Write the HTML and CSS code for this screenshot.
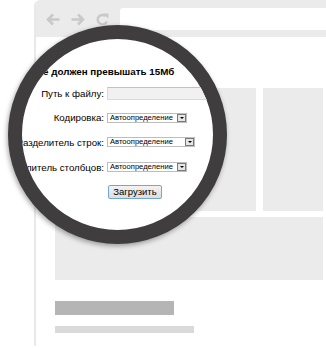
FILE: index.html
```html
<!DOCTYPE html>
<html>
<head>
	<meta charset="UTF-8">
	<title>Загрузка файла</title>
	<link rel="stylesheet" href="styles.css">
</head>
<body>
<div class="CLS_Browser">
	<div class="CLS_Toolbar">
		<div class="CLS_Nav">
			<svg width="14" height="13" viewBox="0 0 14 13"><path d="M13.5 6.5H2M7 1.5L2 6.5l5 5" fill="none" stroke="#c9c9c9" stroke-width="2.6"/></svg>
			<svg width="14" height="13" viewBox="0 0 14 13"><path d="M0.5 6.5H12M7 1.5l5 5-5 5" fill="none" stroke="#c9c9c9" stroke-width="2.6"/></svg>
			<svg width="13" height="13" viewBox="0 0 13 13"><path d="M10.8 8.3A4.7 4.7 0 1 1 9.5 3.1" fill="none" stroke="#c9c9c9" stroke-width="2.4"/><path d="M7 0.4h5.4v5.4z" fill="#c9c9c9"/></svg>
		</div>
		<div class="CLS_Address"></div>
	</div>
	<div class="CLS_Page">
		<div class="CLS_Row">
			<div class="CLS_Block CLS_Main"></div>
			<div class="CLS_Block CLS_Side"></div>
		</div>
		<div class="CLS_Block CLS_Wide"></div>
		<div class="CLS_Bar"></div>
		<div class="CLS_Line"></div>
	</div>
</div>

<!-- magnifier over the page -->
<div class="CLS_Lens">
	<div class="CLS_Title">Не должен превышать 15Мб</div>
	<div class="CLS_Form">
		<label class="CLS_Label">Путь к файлу:</label>
		<span class="CLS_File"></span>

		<label class="CLS_Label">Кодировка:</label>
		<span class="CLS_Select"><span class="CLS_Value">Автоопределение</span><span class="CLS_Arrow"></span></span>

		<label class="CLS_Label">Разделитель строк:</label>
		<span class="CLS_Select CLS_SelectWide"><span class="CLS_Value">Автоопределение</span><span class="CLS_Arrow"></span></span>

		<label class="CLS_Label">Разделитель столбцов:</label>
		<span class="CLS_Select"><span class="CLS_Value">Автоопределение</span><span class="CLS_Arrow"></span></span>

		<span></span>
		<span><button class="CLS_Button">Загрузить</button></span>
	</div>
</div>
</body>
</html>
```

FILE: styles.css
```css
body {
	margin: 0;
	background: #FFFFFF;
	font-family: "Liberation Sans", Arial, sans-serif;
	overflow: hidden;
}

.CLS_Browser {
	margin-left: 34px;
	height: 346px;
	border-left: 2px solid #E9E9E9;
	border-top-left-radius: 6px;
	overflow: hidden;
}

.CLS_Toolbar {
	height: 37px;
	background: #EBEBEB;
	display: flex;
	align-items: flex-start;
	padding-top: 8px;
	box-sizing: border-box;
}

.CLS_Nav {
	width: 84px;
	height: 22px;
	display: flex;
	align-items: center;
	gap: 11px;
	padding-left: 10px;
	box-sizing: border-box;
}

.CLS_Address {
	flex: 1;
	height: 22px;
	background: #FFFFFF;
	border-top-left-radius: 3px;
}

.CLS_Page {
	padding: 51px 3px 0 19px;
	display: flex;
	flex-direction: column;
}

.CLS_Row {
	display: flex;
	gap: 7px;
}

.CLS_Block {
	background: #EBEBEB;
}

.CLS_Main {
	width: 201px;
	height: 123px;
}

.CLS_Side {
	flex: 1;
	height: 123px;
}

.CLS_Wide {
	margin-top: 6px;
	height: 63px;
}

.CLS_Bar {
	margin-top: 21px;
	width: 119px;
	height: 14px;
	background: #B5B5B5;
}

.CLS_Line {
	margin-top: 11px;
	width: 139px;
	height: 7px;
	background: #DADADA;
}

/* lens */
.CLS_Lens {
	position: absolute;
	left: 8px;
	top: 25px;
	width: 219px;
	height: 219px;
	box-sizing: border-box;
	border: 14px solid #403D3E;
	border-radius: 50%;
	background: #FFFFFF;
	overflow: hidden;
	box-shadow: -1px 2px 5px rgba(0, 0, 0, 0.35);
	color: #000000;
}

.CLS_Title {
	padding: 26px 0 0 14px;
	height: 13px;
	line-height: 13px;
	font-size: 9.8px;
	font-weight: bold;
	white-space: nowrap;
}

.CLS_Form {
	margin: 3px 0 0 -30px;
	display: grid;
	grid-template-columns: 112px 1fr;
	column-gap: 3px;
	grid-auto-rows: 24.6px;
	align-items: center;
	font-size: 9.7px;
}

.CLS_Label {
	text-align: right;
	white-space: nowrap;
}

.CLS_File {
	display: block;
	height: 13px;
	width: 200px;
	box-sizing: border-box;
	background: #F1F1F1;
	border: 1px solid #DADADA;
	border-top-color: #C2C2C2;
}

.CLS_Select {
	display: flex;
	align-items: center;
	justify-content: space-between;
	width: 80px;
	height: 10px;
	box-sizing: border-box;
	border: 1px solid #BDBDBD;
	background: #FFFFFF;
}

.CLS_SelectWide {
	width: 88px;
}

.CLS_Value {
	padding-left: 2px;
	font-size: 7.6px;
	line-height: 8px;
	white-space: nowrap;
}

.CLS_Arrow {
	position: relative;
	width: 9px;
	height: 8px;
	box-sizing: border-box;
	border: 1px solid #7A7A7A;
	background: #E6E6E6;
}

.CLS_Arrow::after {
	content: "";
	position: absolute;
	left: 1.5px;
	top: 2px;
	border-left: 2.5px solid transparent;
	border-right: 2.5px solid transparent;
	border-top: 2.5px solid #000000;
}

.CLS_Button {
	display: block;
	margin-left: 1px;
	width: 54px;
	height: 14px;
	padding: 0;
	font-family: "Liberation Sans", Arial, sans-serif;
	font-size: 9.5px;
	line-height: 12px;
	color: #000000;
	border: 1px solid #6EA7D8;
	border-radius: 2px;
	background: linear-gradient(#F3F3F3, #DDDDDD);
}
```
